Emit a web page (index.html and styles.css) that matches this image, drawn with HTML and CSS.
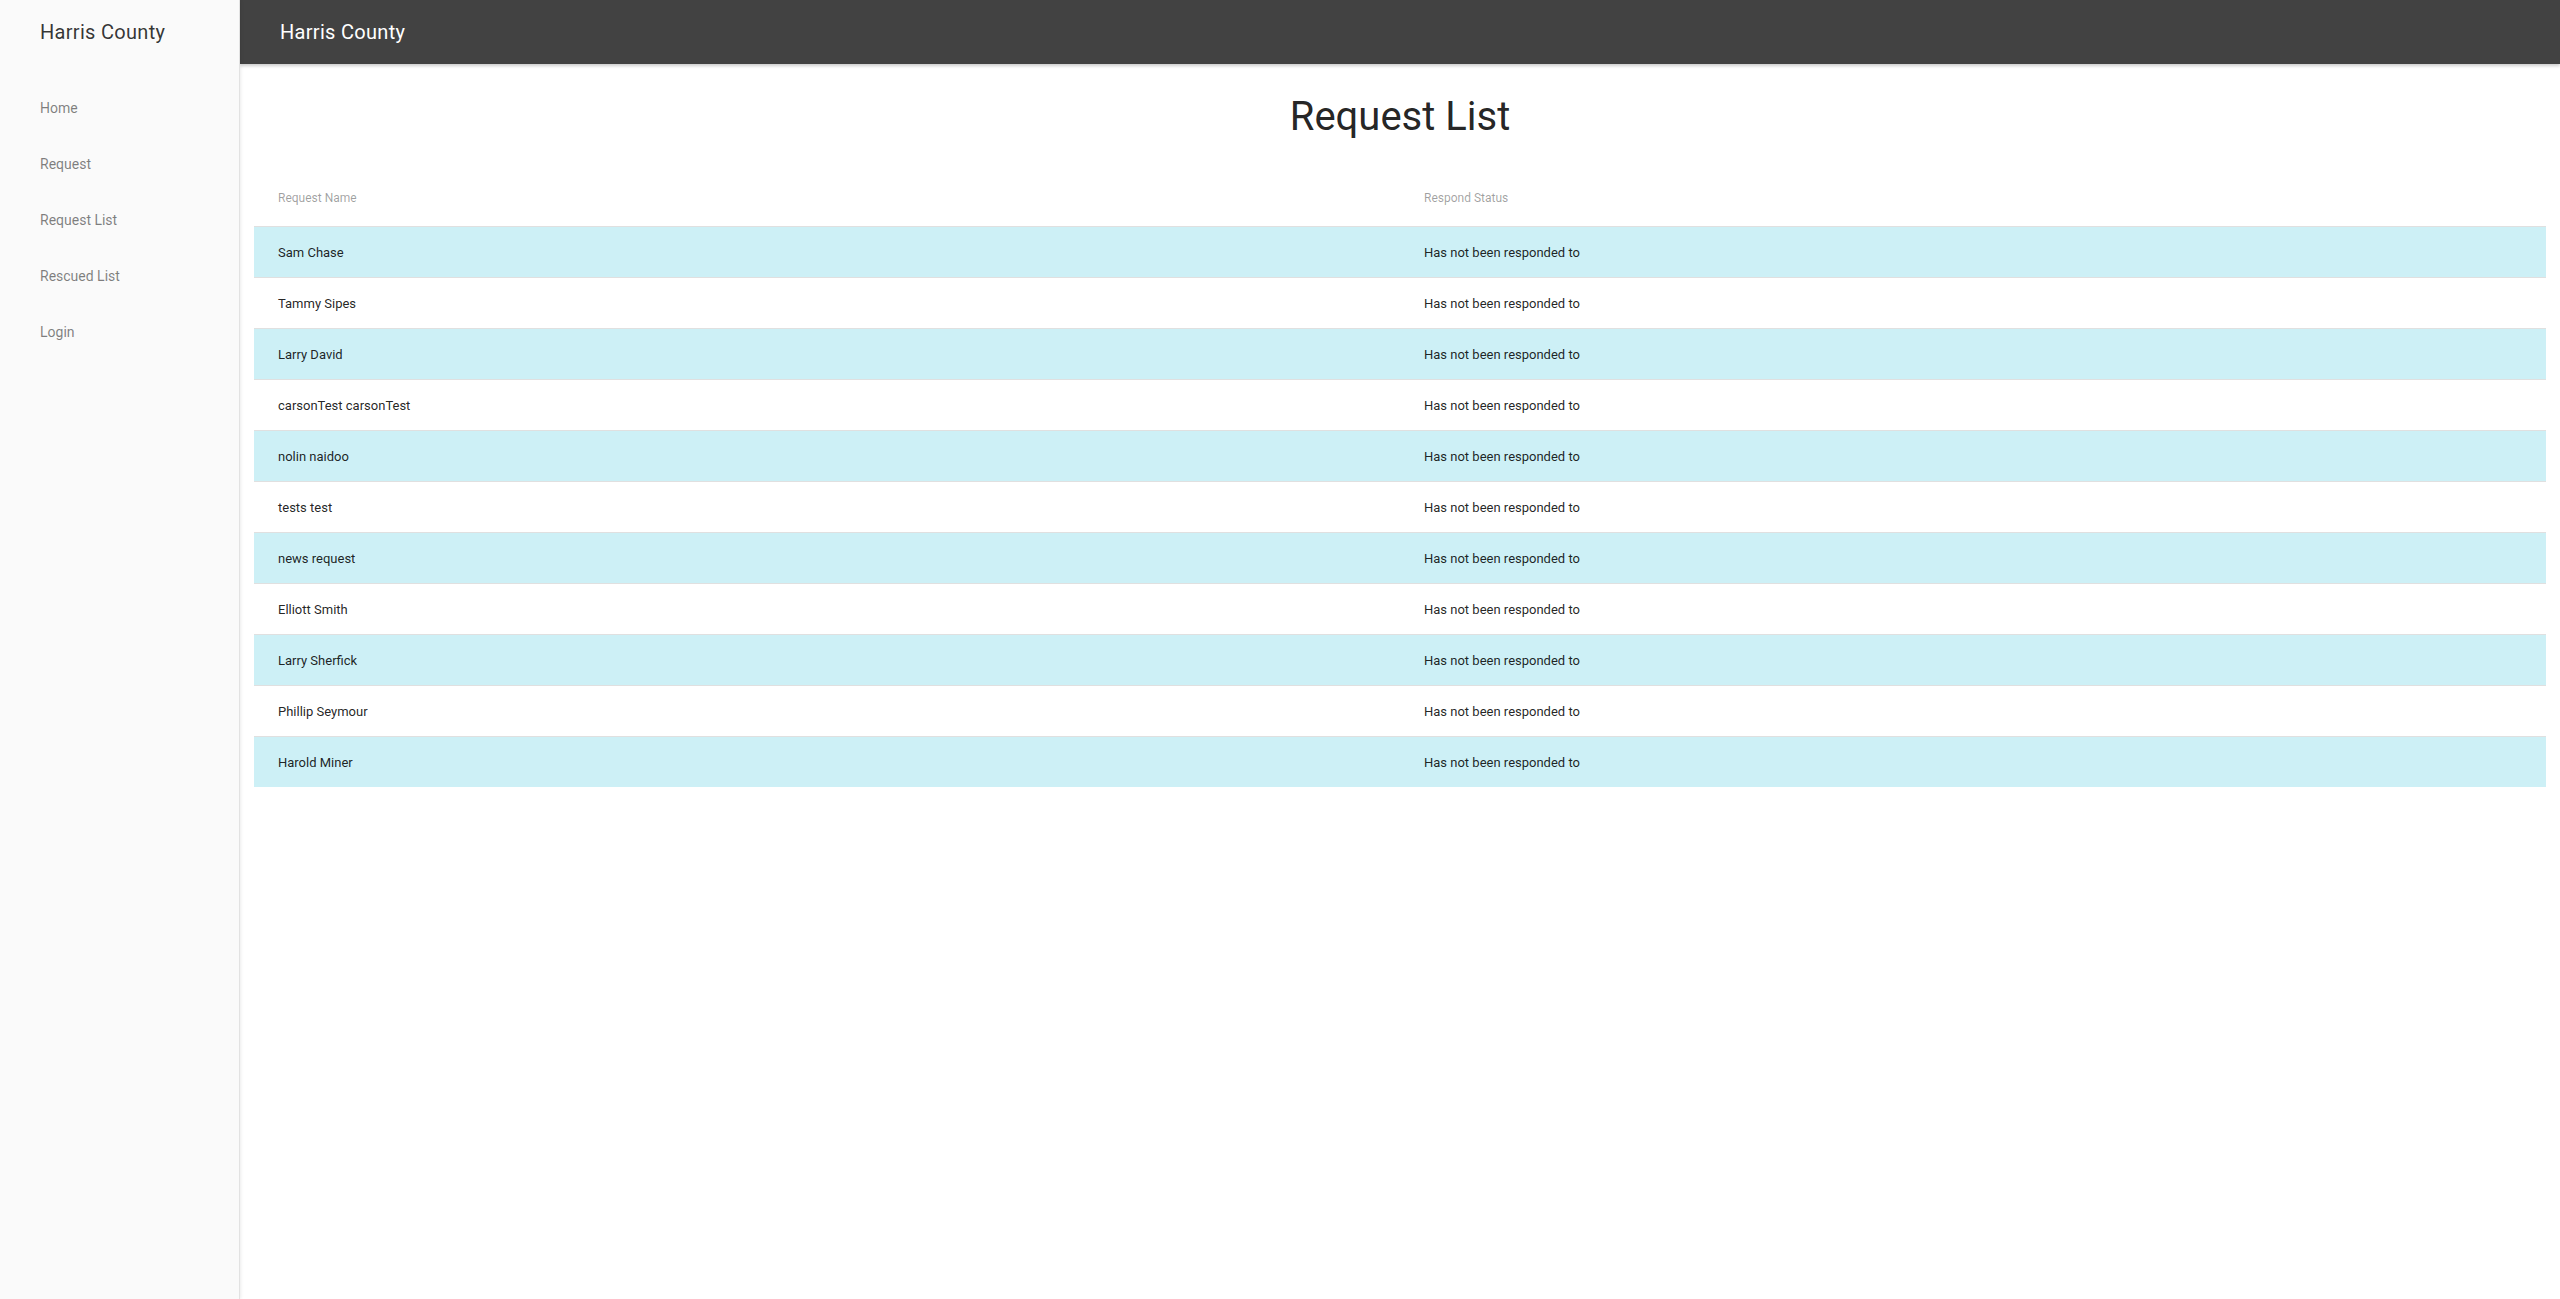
FILE: index.html
```html
<!DOCTYPE html>
<html lang="en">
<head>
<meta charset="utf-8">
<title>Harris County</title>
<link rel="stylesheet" href="styles.css">
</head>
<body>
<div class="app">
  <aside class="sidenav">
    <div class="sidenav-title">Harris County</div>
    <nav class="nav">
      <a class="nav-item" href="#">Home</a>
      <a class="nav-item" href="#">Request</a>
      <a class="nav-item" href="#">Request List</a>
      <a class="nav-item" href="#">Rescued List</a>
      <a class="nav-item" href="#">Login</a>
    </nav>
  </aside>
  <main class="main">
    <header class="toolbar">Harris County</header>
    <section class="content">
      <h1 class="page-title">Request List</h1>
      <div class="table">
        <div class="row header-row">
          <div class="cell">Request Name</div>
          <div class="cell">Respond Status</div>
        </div>
        <div class="row data-row alt"><div class="cell">Sam Chase</div><div class="cell">Has not been responded to</div></div>
        <div class="row data-row"><div class="cell">Tammy Sipes</div><div class="cell">Has not been responded to</div></div>
        <div class="row data-row alt"><div class="cell">Larry David</div><div class="cell">Has not been responded to</div></div>
        <div class="row data-row"><div class="cell">carsonTest carsonTest</div><div class="cell">Has not been responded to</div></div>
        <div class="row data-row alt"><div class="cell">nolin naidoo</div><div class="cell">Has not been responded to</div></div>
        <div class="row data-row"><div class="cell">tests test</div><div class="cell">Has not been responded to</div></div>
        <div class="row data-row alt"><div class="cell">news request</div><div class="cell">Has not been responded to</div></div>
        <div class="row data-row"><div class="cell">Elliott Smith</div><div class="cell">Has not been responded to</div></div>
        <div class="row data-row alt"><div class="cell">Larry Sherfick</div><div class="cell">Has not been responded to</div></div>
        <div class="row data-row"><div class="cell">Phillip Seymour</div><div class="cell">Has not been responded to</div></div>
        <div class="row data-row alt"><div class="cell">Harold Miner</div><div class="cell">Has not been responded to</div></div>
      </div>
    </section>
  </main>
</div>
</body>
</html>
```

FILE: styles.css
```css
* { box-sizing: border-box; }
html, body { margin: 0; padding: 0; height: 100%; }
body {
  font-family: Roboto, "Noto Sans", "Liberation Sans", sans-serif;
  background: #fff;
  color: rgba(0,0,0,.87);
}
.app {
  display: flex;
  height: 100vh;
}
.sidenav {
  width: 240px;
  flex: 0 0 240px;
  background: #fafafa;
  border-right: 1px solid #e2e2e2;
  box-shadow: 1px 0 3px rgba(0,0,0,.08);
  position: relative;
  z-index: 2;
}
.sidenav-title {
  height: 64px;
  display: flex;
  align-items: center;
  padding-left: 40px;
  font-size: 20px;
  letter-spacing: .3px;
  font-weight: 400;
  color: rgba(0,0,0,.8);
}
.nav {
  display: flex;
  flex-direction: column;
  padding-top: 16px;
}
.nav-item {
  height: 56px;
  display: flex;
  align-items: center;
  padding-left: 40px;
  font-size: 14px;
  color: rgba(0,0,0,.5);
  text-decoration: none;
}
.main {
  flex: 1;
  display: flex;
  flex-direction: column;
  min-width: 0;
}
.toolbar {
  height: 64px;
  flex: 0 0 64px;
  background: #424242;
  color: #fff;
  display: flex;
  align-items: center;
  padding-left: 40px;
  font-size: 20px;
  letter-spacing: .3px;
  font-weight: 400;
  box-shadow: 0 2px 3px rgba(0,0,0,.2);
  position: relative;
  z-index: 1;
}
.content {
  padding: 0 14px;
}
.page-title {
  margin: 29px 0 29px;
  text-align: center;
  font-size: 40px;
  line-height: 48px;
  font-weight: 400;
  color: rgba(0,0,0,.87);
}
.table {
  display: flex;
  flex-direction: column;
}
.row {
  display: flex;
  align-items: center;
}
.cell {
  flex: 1;
  padding-left: 24px;
}
.header-row {
  height: 56px;
  font-size: 12px;
  color: rgba(0,0,0,.38);
}
.data-row {
  height: 51px;
  border-top: 1px solid #e0e0e0;
  font-size: 13px;
  color: rgba(0,0,0,.87);
}
.data-row.alt {
  background: #cdf0f6;
}
```
